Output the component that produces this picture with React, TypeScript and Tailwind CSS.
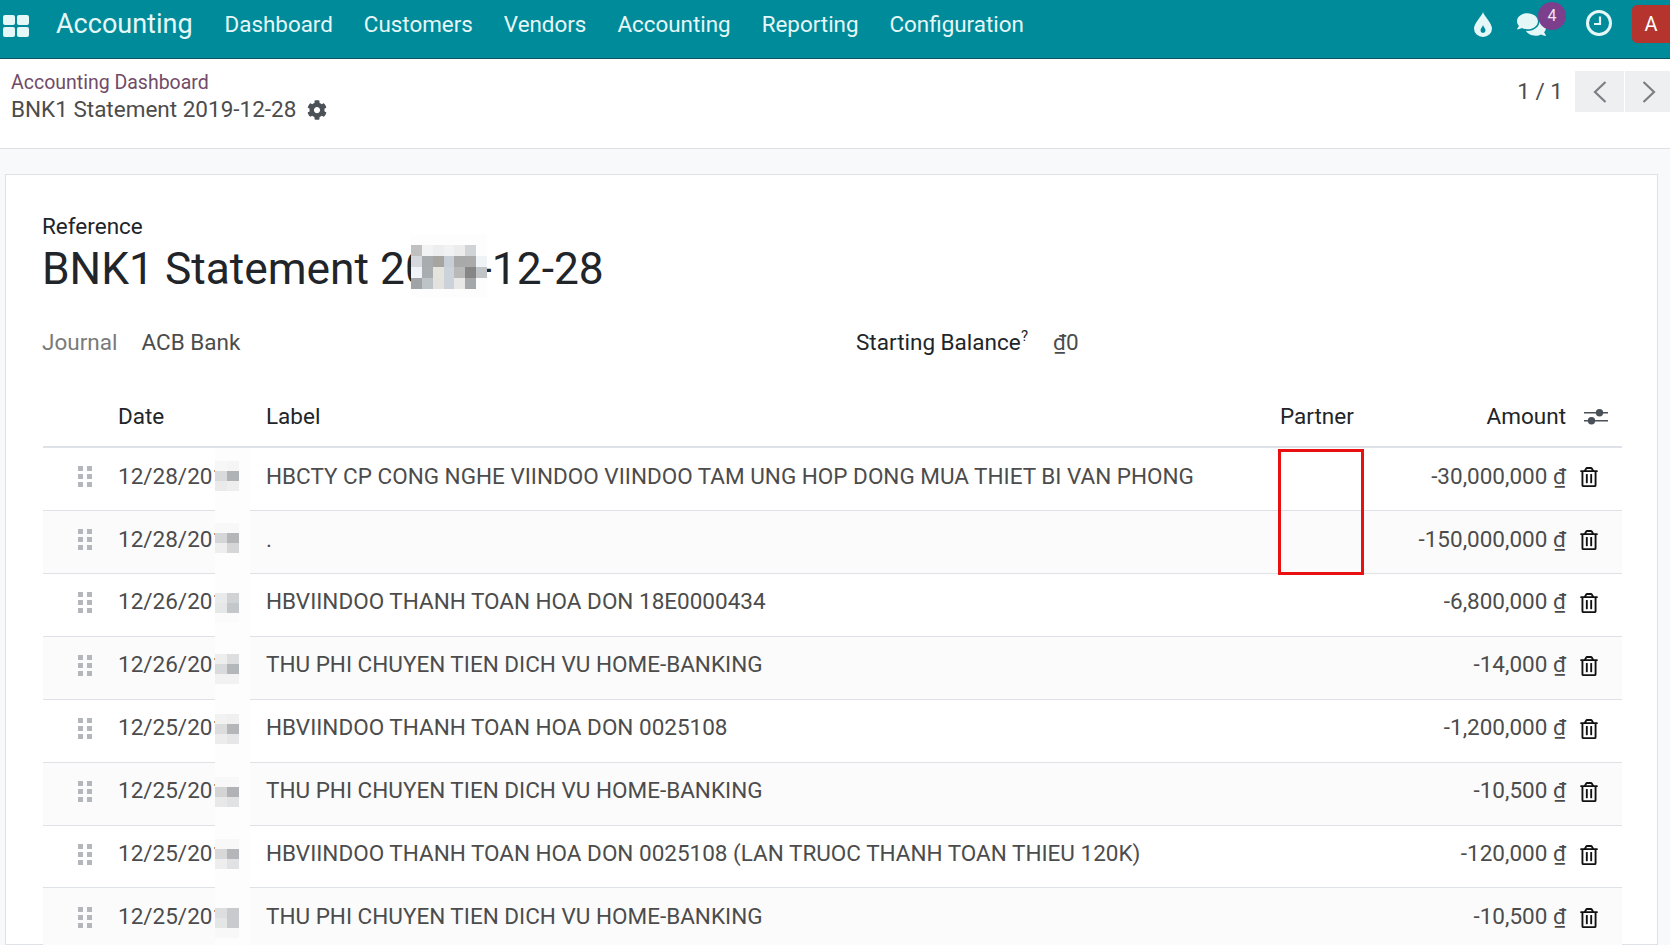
import React from "react";
import { FaCog, FaComments, FaRegTrashAlt } from "react-icons/fa";

const rows = [
  { date: "12/28/2019", label: "HBCTY CP CONG NGHE VIINDOO VIINDOO TAM UNG HOP DONG MUA THIET BI VAN PHONG", amount: "-30,000,000", tileTop: 13, tiles: ["#f7f7f7", "#f5f5f5", "#d8dadb", "#b0b3b6", "#eaeaea", "#eeeeee"] },
  { date: "12/28/2019", label: ".", amount: "-150,000,000", tileTop: 12, tiles: ["#f8f8f8", "#f8f8f8", "#d4d6d8", "#b4b6b8", "#eeeeee", "#d4d6d8"] },
  { date: "12/26/2019", label: "HBVIINDOO THANH TOAN HOA DON 18E0000434", amount: "-6,800,000", tileTop: 19, tiles: ["#e8eaeb", "#d0d3d6", "#e6e8e8", "#c4c7ca", "#fbfbfb", "#fbfbfb"] },
  { date: "12/26/2019", label: "THU PHI CHUYEN TIEN DICH VU HOME-BANKING", amount: "-14,000", tileTop: 17, tiles: ["#eeeeee", "#dcdedf", "#d8dadb", "#b4b7b9", "#f2f2f2", "#f2f2f2"] },
  { date: "12/25/2019", label: "HBVIINDOO THANH TOAN HOA DON 0025108", amount: "-1,200,000", tileTop: 14, tiles: ["#f2f2f2", "#f0f0f0", "#dcdcdc", "#b4b6ba", "#ececec", "#e6e6e8"] },
  { date: "12/25/2019", label: "THU PHI CHUYEN TIEN DICH VU HOME-BANKING", amount: "-10,500", tileTop: 14, tiles: ["#f8f8f8", "#f8f8f8", "#d4d4d4", "#b0b2b6", "#e8e8e8", "#e0e2e4"] },
  { date: "12/25/2019", label: "HBVIINDOO THANH TOAN HOA DON 0025108 (LAN TRUOC THANH TOAN THIEU 120K)", amount: "-120,000", tileTop: 13, tiles: ["#f8f8f8", "#f8f8f8", "#d8d8d8", "#b4b6b9", "#eeeeee", "#e0e2e4"] },
  { date: "12/25/2019", label: "THU PHI CHUYEN TIEN DICH VU HOME-BANKING", amount: "-10,500", tileTop: 20, tiles: ["#dcdedf", "#c8cacd", "#e4e6e6", "#c8cacd", "#f8f8f8", "#f8f8f8"] },
];

const titleTiles = [
  ["#c0c0c0", "#f2f3f5", "#eeeeee", "#f1f2f4", "#ececec", "#d0d4d6", "#fdfdfd"],
  ["#d5d9de", "#a8acae", "#a6a5a2", "#c8ced6", "#a8aaaa", "#aaaaaa", "#f0f3f6"],
  ["#f0f4f8", "#a8adb0", "#e5e3dc", "#cbd2da", "#b8b9b8", "#868686", "#c0c4c6"],
  ["#a0a4a6", "#bcc4c8", "#e4e2dc", "#cbd2da", "#e8e8e6", "#a4a8aa", "#fdfdfd"],
];

function Grip() {
  return (
    <svg width="14" height="22" viewBox="0 0 14 22" fill="#b3b6ba">
      <rect x="0" y="0" width="5" height="5" />
      <rect x="9" y="0" width="5" height="5" />
      <rect x="0" y="8" width="5" height="5" />
      <rect x="9" y="8" width="5" height="5" />
      <rect x="0" y="16" width="5" height="5" />
      <rect x="9" y="16" width="5" height="5" />
    </svg>
  );
}

function Sliders() {
  return (
    <svg width="24" height="20" viewBox="0 0 24 20" fill="#495057">
      <rect x="0" y="5" width="24" height="1.500" />
      <rect x="0" y="13" width="24" height="1.500" />
      <circle cx="15.500" cy="5.700" r="3.700" />
      <circle cx="7.500" cy="13.700" r="3.700" />
    </svg>
  );
}

function Drop() {
  return (
    <svg width="18" height="25" viewBox="0 0 18 25">
      <path fillRule="evenodd" fill="#e6f7f8" d="M9 0C10 4 18 11 18 16.500A9 8.500 0 0 1 0 16.500C0 11 8 4 9 0ZM9 13C8.400 15 6.500 16.500 6.500 18.500A2.500 2.500 0 0 0 11.500 18.500C11.500 16.500 9.600 15 9 13Z" />
    </svg>
  );
}

function Clock() {
  return (
    <svg width="26" height="26" viewBox="0 0 26 26" fill="none" stroke="#e6f7f8">
      <circle cx="13" cy="13" r="11.500" strokeWidth="3" />
      <path d="M14 6.500V14H8" strokeWidth="2.200" />
    </svg>
  );
}

function Apps() {
  return (
    <div className="grid grid-cols-2 gap-[2px] w-[26px]">
      <div className="h-[10px] rounded-[2px] bg-[#e6f7f8]" />
      <div className="h-[10px] rounded-[2px] bg-[#e6f7f8]" />
      <div className="h-[10px] rounded-[2px] bg-[#e6f7f8]" />
      <div className="h-[10px] rounded-[2px] bg-[#e6f7f8]" />
    </div>
  );
}

function Chevron({ left }: { left?: boolean }) {
  return (
    <svg width="14" height="24" viewBox="0 0 14 24" fill="none" stroke="#7b7f83" strokeWidth="2.200">
      <path d={left ? "M12.500 2L2 12L12.500 22" : "M1.500 2L12 12L1.500 22"} />
    </svg>
  );
}

export default function App() {
  return (
    <div className="h-[945px] w-[1670px] overflow-hidden flex flex-col bg-[#f8f9fa] font-['Roboto',sans-serif] text-[22.5px] text-[#4c4c4c]">
      <nav className="h-[59px] shrink-0 flex items-center bg-[#008b9b] border-b border-b-[#0b5560] text-[#e6f7f8] relative">
        <div className="pl-[3px] mb-[6px]"><Apps /></div>
        <span className="ml-[27px] text-[27px] mb-[9px]">Accounting</span>
        <div className="flex gap-[31px] ml-[32px] mb-[9px] text-[22.4px]">
          <span>Dashboard</span>
          <span>Customers</span>
          <span>Vendors</span>
          <span>Accounting</span>
          <span>Reporting</span>
          <span>Configuration</span>
        </div>
        <div className="ml-auto flex items-center h-full">
          <div className="mb-[10px] -mr-[1px]"><Drop /></div>
          <div className="relative ml-[26px] mb-[10px]">
            <FaComments size={29} color="#e6f7f8" />
            <span className="absolute -top-[8px] left-[21px] w-[28px] h-[28px] rounded-full bg-[#7b3f8c] text-[16px] text-[#f0e6f2] flex items-center justify-center">4</span>
          </div>
          <div className="ml-[40px] mb-[12px]"><Clock /></div>
          <div className="ml-[20px] mb-[10px] w-[38px] h-[38px] rounded-l-[5px] bg-[#b5352e] text-white flex items-center justify-center text-[20px]">A</div>
        </div>
      </nav>

      <header className="h-[90px] shrink-0 bg-white border-b border-b-[#dee2e6] flex justify-between pl-[11px]">
        <div className="pt-[10px] leading-[27px]">
          <div className="text-[#714b67] text-[19.5px]">Accounting Dashboard</div>
          <div className="flex items-center text-[#4c4c4c]">
            BNK1 Statement 2019-12-28
            <FaCog size={20} color="#4c5157" className="ml-[11px]" />
          </div>
        </div>
        <div className="flex pt-[12px]">
          <span className="mr-[12px] mt-[4px] text-[#4c4c4c]">1 / 1</span>
          <div className="flex h-[41px] gap-[1px]">
            <div className="w-[49px] bg-[#eeeff1] flex items-center justify-center"><Chevron left /></div>
            <div className="w-[45px] bg-[#eeeff1] flex items-center justify-center pl-[3px]"><Chevron /></div>
          </div>
        </div>
      </header>

      <main className="flex-1 min-h-0 pl-[5px] pr-[12px] pt-[25px]">
        <section className="h-full bg-white border border-[#dee2e6] pl-[37px] pr-[35px] relative">
          <div className="pt-[37px] -ml-[1px] text-[#212529] leading-[28px]">Reference</div>
          <div className="relative -ml-[1px] mt-[2px]">
            <h1 className="text-[44.3px] leading-[54px] text-[#212529]">BNK1 Statement 2019-12-28</h1>
            <div className="absolute left-[369px] -top-[7px] w-[76px] h-[62px] bg-[#fdfdfd] pt-[10px]">
              {titleTiles.map((r, i) => (
                <div key={i} className="flex">
                  {r.map((c, j) => (
                    <div key={j} className="w-[11px] h-[11px]" style={{ background: c }} />
                  ))}
                </div>
              ))}
            </div>
          </div>

          <div className="flex mt-[32px] -ml-[1px] leading-[28px]">
            <div className="flex w-[814px]">
              <span className="text-[#7a7a7a] w-[99.5px]">Journal</span>
              <span>ACB Bank</span>
            </div>
            <div className="flex">
              <span className="text-[#212529] w-[197px] relative">Starting Balance<span className="absolute left-[165px] -top-[6px] text-[15px]">?</span></span>
              <span>₫0</span>
            </div>
          </div>

          <div className="mt-[32px]">
            <div className="grid grid-cols-[75px_148px_1014px_90px_196px_58px] h-[60px] items-center border-b-2 border-b-[#dee2e6] text-[#212529]">
              <div />
              <div>Date</div>
              <div>Label</div>
              <div>Partner</div>
              <div className="text-right">Amount</div>
              <div className="flex justify-center pl-[1px]"><Sliders /></div>
            </div>
            {rows.map((r, i) => (
              <div
                key={i}
                className={`grid grid-cols-[75px_148px_1014px_90px_196px_58px] h-[62.93px] items-center border-b border-b-[#dee2e6] relative pb-[5px] ${i % 2 ? "bg-[#fbfbfc]" : "bg-white"}`}
              >
                <div className="flex justify-center pl-[7px] mr-[-2px] pt-[2px]"><Grip /></div>
                <div className="whitespace-nowrap">{r.date}</div>
                <div className="whitespace-nowrap">{r.label}</div>
                <div />
                <div className="text-right whitespace-nowrap">{r.amount} <span className="underline">₫</span></div>
                <div className="flex justify-start pl-[13px] pt-[2px]"><FaRegTrashAlt size={20} color="#111" /></div>
                <div className="absolute left-[172px] top-0 -bottom-[1px] w-[35px] bg-[#fdfdfd]">
                  <div className="grid grid-cols-2 w-[24px]" style={{ marginTop: r.tileTop }}>
                    {r.tiles.map((c, j) => (
                      <div key={j} className="w-[12px] h-[10px]" style={{ background: c }} />
                    ))}
                  </div>
                </div>
              </div>
            ))}
            <div className="absolute left-[1272px] top-[274px] w-[86px] h-[126px] border-[3px] border-[#e81010]" />
          </div>
        </section>
      </main>
    </div>
  );
}
